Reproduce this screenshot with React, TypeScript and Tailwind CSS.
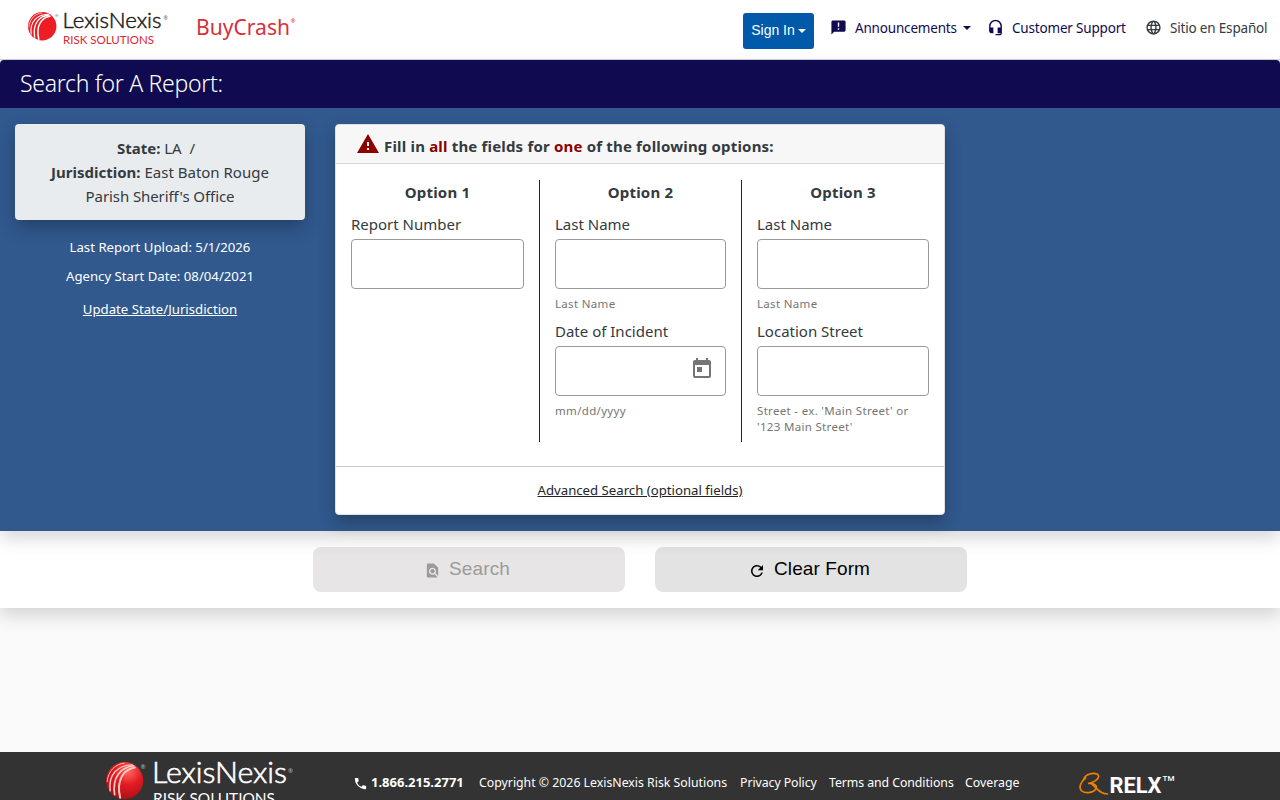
import type { ReactNode } from "react";
import {
  MdAnnouncement,
  MdFindInPage,
  MdHeadsetMic,
  MdLanguage,
  MdPhone,
  MdRefresh,
  MdToday,
  MdWarning,
} from "react-icons/md";

function Globe({ glossy = false }: { glossy?: boolean }) {
  return (
    <g>
      <defs>
        <radialGradient id="globe-shine" cx="0.6" cy="0.25" r="0.8">
          <stop offset="0" stopColor="#ff6a60" />
          <stop offset="0.45" stopColor="#e31b23" />
          <stop offset="1" stopColor="#a80f16" />
        </radialGradient>
      </defs>
      <circle cx="14.2" cy="14.2" r="14.2" fill={glossy ? "url(#globe-shine)" : "#ee1c25"} />
      <g fill="none" stroke={glossy ? "#ffc9c4" : "#ffffff"} strokeLinecap="round">
        <path d="M20 2.2C9 2.5 1.500 9.500 3.200 22" strokeWidth="1.100" />
        <path d="M21 3C11.500 4 4.500 11 6.600 25" strokeWidth="1.300" />
        <path d="M22 4.200C14 5.500 7.500 13 10.800 27.300" strokeWidth="1.500" />
        <path d="M14 0.900C7 1.500 1.500 7 0.900 15" strokeWidth="0.700" />
      </g>
    </g>
  );
}

function Caret() {
  return <span className="h-0 w-0 border-x-4 border-t-4 border-x-transparent border-t-current" />;
}

function Field({ label, hint, icon }: { label: string; hint?: ReactNode; icon?: ReactNode }) {
  return (
    <div>
      <div className="h-[27px] text-[15px] leading-6">{label}</div>
      <div className="flex h-[50px] items-center justify-end rounded-[4px] border border-[#9b9b9b] bg-white pr-[11px] pb-[5px]">
        {icon}
      </div>
      {hint && (
        <div className="mt-[7px] mb-[7px] text-[11.500px] leading-4 tracking-[0.320px] whitespace-nowrap text-[#757575]">
          {hint}
        </div>
      )}
    </div>
  );
}

export default function App() {
  return (
    <div className="flex h-[800px] w-[1280px] flex-col overflow-hidden bg-[#fafafa] font-['Noto_Sans','Liberation_Sans',sans-serif] text-[#343a40]">
      <header className="flex h-[60px] shrink-0 items-start border-b border-[#cfcfd4] bg-white pl-7 text-[#100b50]">
        <svg className="mt-[10px]" width="142" height="38" viewBox="0 0 142 38">
          <g transform="translate(0 2)">
            <Globe />
          </g>
          <text x="27" y="7" fontSize="4" fill="#555">®</text>
          <text x="34.500" y="18.300" fontFamily="Lato" fontWeight="300" fontSize="21.500" fill="#231f20" stroke="#231f20" strokeWidth="0.500" textLength="99" lengthAdjust="spacingAndGlyphs">LexisNexis</text>
          <text x="135.500" y="10" fontSize="5" fill="#555">®</text>
          <text x="35" y="33.800" fontFamily="Lato" fontSize="11.500" fill="#dc2535" textLength="91" lengthAdjust="spacingAndGlyphs">RISK SOLUTIONS</text>
        </svg>
        <svg className="mt-[10px] ml-[26px]" width="102" height="36" viewBox="0 0 102 36">
          <text x="0" y="25" fontSize="22.500" fill="#d92f3a" textLength="94" lengthAdjust="spacingAndGlyphs">BuyCrash</text>
          <text x="94.500" y="13" fontSize="6" fill="#d92f3a">®</text>
        </svg>
        <div className="ml-auto flex items-start pr-3">
          <button className="mt-[13px] flex h-9 w-[71px] items-center justify-center gap-[3px] rounded-[3px] bg-[#0059a9] pb-px font-['Liberation_Sans',sans-serif] text-[14px] text-white">
            Sign In <Caret />
          </button>
          <nav className="flex pt-[16px] text-[13.500px] leading-6 tracking-[-0.180px]">
            <a className="ml-4 flex w-[141px] items-center">
              <MdAnnouncement size={17} className="-mt-px" />
              <span className="ml-2 mr-auto whitespace-nowrap">Announcements</span>
              <Caret />
            </a>
            <a className="ml-4 flex w-[139px] items-center">
              <MdHeadsetMic size={17} className="-mt-px" />
              <span className="ml-2 whitespace-nowrap">Customer Support</span>
            </a>
            <a className="ml-[19px] flex w-[123px] items-center text-[#343a40]">
              <MdLanguage size={17} className="-mt-px" />
              <span className="ml-2 whitespace-nowrap">Sitio en Español</span>
            </a>
          </nav>
        </div>
      </header>

      <section className="relative z-10 h-[471px] shrink-0 bg-[#31598e] shadow-[0_8px_16px_rgba(0,0,0,0.15)]">
        <div className="bg-white">
          <h1 className="h-12 rounded-t-[4px] bg-[#100b50] pl-5 text-[23px] leading-[47px] font-light tracking-[-0.300px] text-white">
            Search for A Report:
          </h1>
        </div>
        <div className="flex gap-[30px] px-[15px] pt-4">
          <aside className="w-[290px] text-center">
            <div className="h-24 rounded-[4px] bg-[#e9ecef] pt-3 text-[15px] leading-6 shadow-[0_8px_16px_rgba(0,0,0,0.25)]">
              <div className="pr-2"><b>State:</b> LA &nbsp;/</div>
              <div><b>Jurisdiction:</b> East Baton Rouge</div>
              <div className="tracking-[-0.080px]">Parish Sheriff's Office</div>
            </div>
            <div className="pt-[15px] text-[13.200px] leading-6 text-white">
              <div>Last Report Upload: 5/1/2026</div>
              <div className="mt-[5px]">Agency Start Date: 08/04/2021</div>
              <a className="mt-[9px] block underline">Update State/Jurisdiction</a>
            </div>
          </aside>

          <main className="h-[391px] w-[610px] rounded-[4px] border border-[#dfdfdf] bg-white shadow-[0_8px_16px_rgba(0,0,0,0.25)]">
            <div className="flex h-[39px] items-center rounded-t-[4px] border-b border-[#d5d5d5] bg-[#f7f7f7] pl-5">
              <MdWarning size={24} className="text-[#8b0000]" />
              <div className="ml-1 pt-[5px] text-[15px] font-bold tracking-[0.180px]">
                Fill in <span className="text-[#8b0000]">all</span> the fields for{" "}
                <span className="text-[#8b0000]">one</span> of the following options:
              </div>
            </div>
            <div className="mt-4 grid h-[262px] grid-cols-[203px_202px_203px]">
              <div className="px-[15px]">
                <h2 className="h-8 text-center text-[15px] leading-6 font-bold tracking-[0.200px]">Option 1</h2>
                <Field label="Report Number" />
              </div>
              <div className="border-l border-[#212529] px-[15px]">
                <h2 className="h-8 text-center text-[15px] leading-6 font-bold tracking-[0.200px]">Option 2</h2>
                <Field label="Last Name" hint="Last Name" />
                <Field label="Date of Incident" hint="mm/dd/yyyy" icon={<MdToday size={24} className="text-[#757575]" />} />
              </div>
              <div className="border-l border-[#212529] px-[15px]">
                <h2 className="h-8 text-center text-[15px] leading-6 font-bold tracking-[0.200px]">Option 3</h2>
                <Field label="Last Name" hint="Last Name" />
                <Field label="Location Street" hint={<>Street - ex. 'Main Street' or<br />'123 Main Street'</>} />
              </div>
            </div>
            <div className="mt-6 border-t border-[#cccccc] pt-[11px] text-center text-[13.200px] leading-6 text-[#212529]">
              <a className="underline">Advanced Search (optional fields)</a>
            </div>
          </main>
        </div>
      </section>

      <section className="flex h-[77px] shrink-0 justify-center gap-[30px] bg-white pt-4 font-['Liberation_Sans',sans-serif] text-[19px] shadow-[0_8px_16px_rgba(0,0,0,0.15)]">
        <button className="flex h-[45px] w-[312px] items-center justify-center gap-[8px] rounded-[8px] bg-[#e7e5e6] pr-1 pb-px text-[#9b9b9b]">
          <MdFindInPage size={17} className="mt-[3px]" />
          <span className="tracking-[0.100px]">Search</span>
        </button>
        <button className="flex h-[45px] w-[312px] items-center justify-center gap-[8px] rounded-[8px] bg-[#e3e3e3] pr-1 pb-px text-black">
          <MdRefresh size={18} className="mt-[3px]" />
          <span className="tracking-[0.100px]">Clear Form</span>
        </button>
      </section>

      <footer className="mt-auto flex h-12 shrink-0 overflow-hidden bg-[#333333] pl-[106px] text-[12.300px] leading-6 whitespace-nowrap text-white">
        <svg className="shrink-0" width="190" height="48" viewBox="0 0 190 48">
          <g transform="translate(0 10) scale(1.310)">
            <Globe glossy />
          </g>
          <text x="34.500" y="17" fontSize="6" fill="#bbb">®</text>
          <text x="46" y="31" fontFamily="Lato" fontWeight="300" fontSize="29" fill="#fff" stroke="#fff" strokeWidth="0.600" textLength="135" lengthAdjust="spacingAndGlyphs">LexisNexis</text>
          <text x="182" y="21" fontSize="6" fill="#bbb">®</text>
          <text x="47" y="51.500" fontFamily="Lato" fontSize="15" fill="#fff" textLength="122" lengthAdjust="spacingAndGlyphs">RISK SOLUTIONS</text>
        </svg>
        <div className="ml-[57px] flex w-[126px] items-center pt-[12px]">
          <MdPhone size={15} className="mt-[3px] mr-[3px]" />
          <b className="text-[13px]">1.866.215.2771</b>
        </div>
        <div className="flex gap-3 pt-[19px]">
          <span className="w-[249px]">Copyright © 2026 LexisNexis Risk Solutions</span>
          <a className="w-[77px] tracking-[-0.060px]">Privacy Policy</a>
          <a className="w-[124px] tracking-[-0.060px]">Terms and Conditions</a>
          <a className="w-[55px]">Coverage</a>
        </div>
        <svg className="ml-[59px] shrink-0" width="100" height="48" viewBox="0 0 100 48">
          <g fill="none" stroke="#ef8200" strokeWidth="1.700" strokeLinecap="round">
            <path d="M5 26.500C7 22 14 20.500 18 22C22 24 18.500 29.500 9 31.500C15 31 18.800 33.500 16.800 37C14 41 5.500 42 2.200 38.500C-0.500 35 2 29.500 6.500 26" />
            <path d="M13 32C17.500 36 21 42 28.500 42" />
          </g>
          <text x="30.500" y="40.500" fontFamily="Roboto" fontWeight="700" fontSize="22.500" fill="#fff" textLength="52" lengthAdjust="spacingAndGlyphs">RELX</text>
          <text x="83.500" y="29" fontFamily="Roboto" fontWeight="500" fontSize="8" fill="#fff">TM</text>
        </svg>
      </footer>
    </div>
  );
}
